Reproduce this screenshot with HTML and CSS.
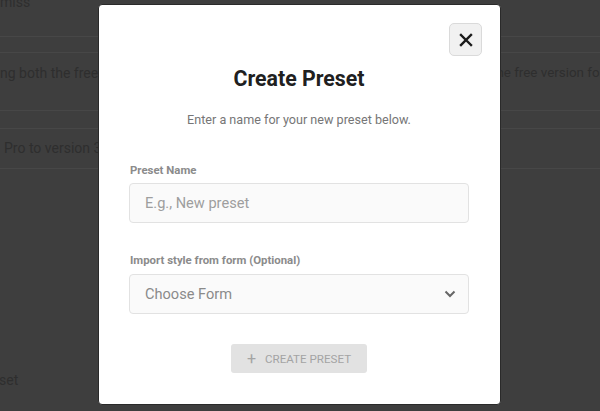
FILE: index.html
```html
<!DOCTYPE html>
<html>
<head>
<meta charset="utf-8">
<link rel="stylesheet" href="styles.css">
</head>
<body>
<div class="page">
  <div class="row row-top"><span class="t">miss</span></div>
  <div class="row row-a"><span class="t left">ng both the free and Pro</span><span class="t right">the free version for</span></div>
  <div class="row row-b"><span class="t">Pro to version 3</span></div>
  <div class="row row-c"><span class="t">set</span></div>
</div>
<div class="overlay">
  <div class="modal">
    <button class="close" aria-label="Close">
      <svg width="14" height="14" viewBox="0 0 14 14"><path d="M2 2L12 12M12 2L2 12" stroke="#1a1a1a" stroke-width="2.4" stroke-linecap="square"/></svg>
    </button>
    <h2 class="title">Create Preset</h2>
    <p class="sub">Enter a name for your new preset below.</p>
    <label class="label l1">Preset Name</label>
    <div class="field"><span class="ph">E.g., New preset</span></div>
    <label class="label l2">Import style from form (Optional)</label>
    <div class="field select"><span class="sel">Choose Form</span>
      <svg width="12" height="8" viewBox="0 0 12 8"><path d="M1.5 1.5L6 6L10.5 1.5" fill="none" stroke="#666" stroke-width="2"/></svg>
    </div>
    <div class="actions"><button class="create"><span class="plus">+</span>CREATE PRESET</button></div>
  </div>
</div>
</body>
</html>
```
FILE: styles.css
```css
html, body { margin: 0; padding: 0; }
body {
  width: 600px; height: 411px; overflow: hidden;
  background: #dedede;
  font-family: Roboto, "Liberation Sans", sans-serif;
  position: relative;
}
.page { display: flex; flex-direction: column; }
.row { color: #a6a6a6; font-size: 14px; line-height: 20px; white-space: nowrap; overflow: hidden; }
.row-top { height: 36px; border-bottom: 1px solid #fff; }
.row-top .t { display: block; margin-top: -8px; }
.row-a { margin-top: 15px; border-top: 1px solid #fff; border-bottom: 1px solid #fff; display: flex; align-items: flex-start; padding-top: 10px; box-sizing: border-box; height: 59px; }
.row-a .left { width: 492px; flex: none; overflow: hidden; }
.row-a .right { font-size: 13.4px; }
.row-b { margin-top: 17px; border-top: 1px solid #fff; height: 41px; border-bottom: 1px solid #fff; display: flex; align-items: flex-start; padding-top: 9px; box-sizing: border-box; }
.row-b .t { margin-left: 4px; }
.row-c { margin-top: 201px; }
.row-c .t { display: block; margin-left: -1px; }

.overlay { position: absolute; inset: 0; background: rgba(0, 0, 0, 0.72); }
.modal {
  position: absolute; left: 98px; top: 4px;
  width: 403px; height: 401px; box-sizing: border-box;
  background: #fff; border: 1px solid #2a2a2a; border-radius: 4px;
  display: flex; flex-direction: column;
  padding: 0 31px 0 30px;
}
.close {
  position: absolute; top: 18px; right: 18px;
  width: 33px; height: 33px; padding: 0;
  background: #f1f1f1; border: 1px solid #dadada; border-radius: 5px;
  display: flex; align-items: center; justify-content: center;
}
.title { margin: 60px 0 0; font-size: 21.3px; line-height: 28px; font-weight: 700; color: #202020; text-align: center; }
.sub { margin: 17px 0 0; font-size: 12.6px; line-height: 20px; color: #767676; text-align: center; }
.label { display: block; font-size: 11.4px; line-height: 16px; font-weight: 700; color: #8b8b8b; padding-left: 1px; }
.l1 { margin-top: 32px; }
.l2 { margin-top: 29px; }
.field {
  margin-top: 5px; height: 40px; box-sizing: border-box;
  background: #fafafa; border: 1px solid #e2e2e2; border-radius: 4px;
  display: flex; align-items: center; padding: 0 12px 0 15px;
  font-size: 14.6px;
}
.l2 + .field { margin-top: 6px; }
.ph { color: #9e9e9e; }
.select { justify-content: space-between; }
.sel { color: #8a8a8a; }
.actions { display: flex; justify-content: center; margin-top: 30px; }
.create {
  width: 136px; height: 29px; padding: 0;
  background: #e2e2e2; border: none; border-radius: 3px;
  font-family: Roboto, "Liberation Sans", sans-serif;
  font-size: 11.6px; color: #a4a4a4;
  display: flex; align-items: center; justify-content: center;
}
.plus { font-size: 16px; margin-right: 9px; line-height: 12px; }
```
